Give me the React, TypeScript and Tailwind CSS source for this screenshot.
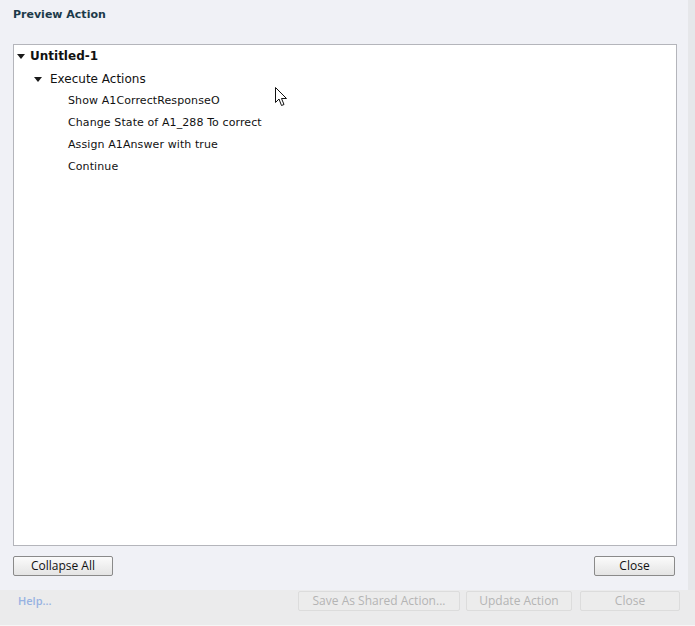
import type { ReactNode } from 'react';

const verdana = { fontFamily: '"DejaVu Sans", Verdana, sans-serif' };
const segoe = { fontFamily: '"Open Sans", "Liberation Sans", sans-serif' };

function Caret() {
  return (
    <svg width="8" height="5" viewBox="0 0 8 5" className="shrink-0">
      <path d="M0 0 L8 0 L4 5 Z" fill="#1a1a1a" />
    </svg>
  );
}

function Button({ children, className = '', disabled = false }: { children: ReactNode; className?: string; disabled?: boolean }) {
  return (
    <div
      className={`flex h-[20px] items-center justify-center rounded-[2px] border text-[12px] ${
        disabled
          ? 'border-[#dcdcdc] bg-[#ececec] text-[#b4b4b4]'
          : 'border-[#8a8a8a] bg-gradient-to-b from-[#fbfbfb] to-[#e4e4e4] text-[#111]'
      } ${className}`}
      style={segoe}
    >
      {children}
    </div>
  );
}

const actions = ['Show A1CorrectResponseO', 'Change State of A1_288 To correct', 'Assign A1Answer with true', 'Continue'];

export default function App() {
  return (
    <div className="flex h-[626px] w-[695px] flex-col overflow-hidden bg-[#ebebec]">
      <div className="flex h-[590px]">
        <div className="relative flex w-[688px] flex-col bg-[#f0f1f6] px-[13px]">
          <div className="mt-[8px] h-[14px] text-[11px] font-bold leading-[14px] text-[#1c3a4a]" style={verdana}>
            Preview Action
          </div>

          {/* tree */}
          <div className="mt-[22px] h-[502px] w-[664px] border border-[#b4b5bb] bg-white" style={verdana}>
            <div className="flex h-[22px] items-center gap-[5px] pl-[3px] text-[12px] font-bold text-[#111]">
              <Caret />
              <span>Untitled-1</span>
            </div>
            <div className="mt-[1px] flex h-[22px] items-center gap-[8px] pl-[20px] text-[12px] text-[#111]">
              <Caret />
              <span>Execute Actions</span>
            </div>
            {actions.map((a) => (
              <div key={a} className="flex h-[22px] items-center pl-[54px] text-[11px] tracking-[0.1px] text-[#111]">
                {a}
              </div>
            ))}
          </div>

          <div className="mt-[10px] flex justify-between">
            <Button className="w-[100px]">Collapse All</Button>
            <Button className="w-[81px]">Close</Button>
          </div>

          {/* mouse pointer */}
          <svg className="absolute left-[275px] top-[87px]" width="13" height="20" viewBox="0 0 13 20">
            <path d="M0.5 0.5 L0.5 15.5 L4 12 L6.5 18.5 L9 17.5 L6.5 11.5 L11.5 11.5 Z" fill="#fff" stroke="#111" strokeWidth="1" strokeLinejoin="round" />
          </svg>
        </div>
        <div className="w-[7px] bg-[#e6e7ea]" />
      </div>

      {/* underlying dialog footer */}
      <div className="flex h-[36px] items-start border-b border-[#f6f6f6] pt-[1px] pr-[15px]">
        <div className="pl-[18px] pt-[2px] text-[11px] font-semibold text-[#97b2e2]" style={segoe}>
          Help...
        </div>
        <div className="ml-auto flex gap-[6px]">
          <Button disabled className="w-[162px]">Save As Shared Action...</Button>
          <Button disabled className="w-[106px]">Update Action</Button>
          <Button disabled className="ml-[2px] w-[100px]">Close</Button>
        </div>
      </div>
    </div>
  );
}
